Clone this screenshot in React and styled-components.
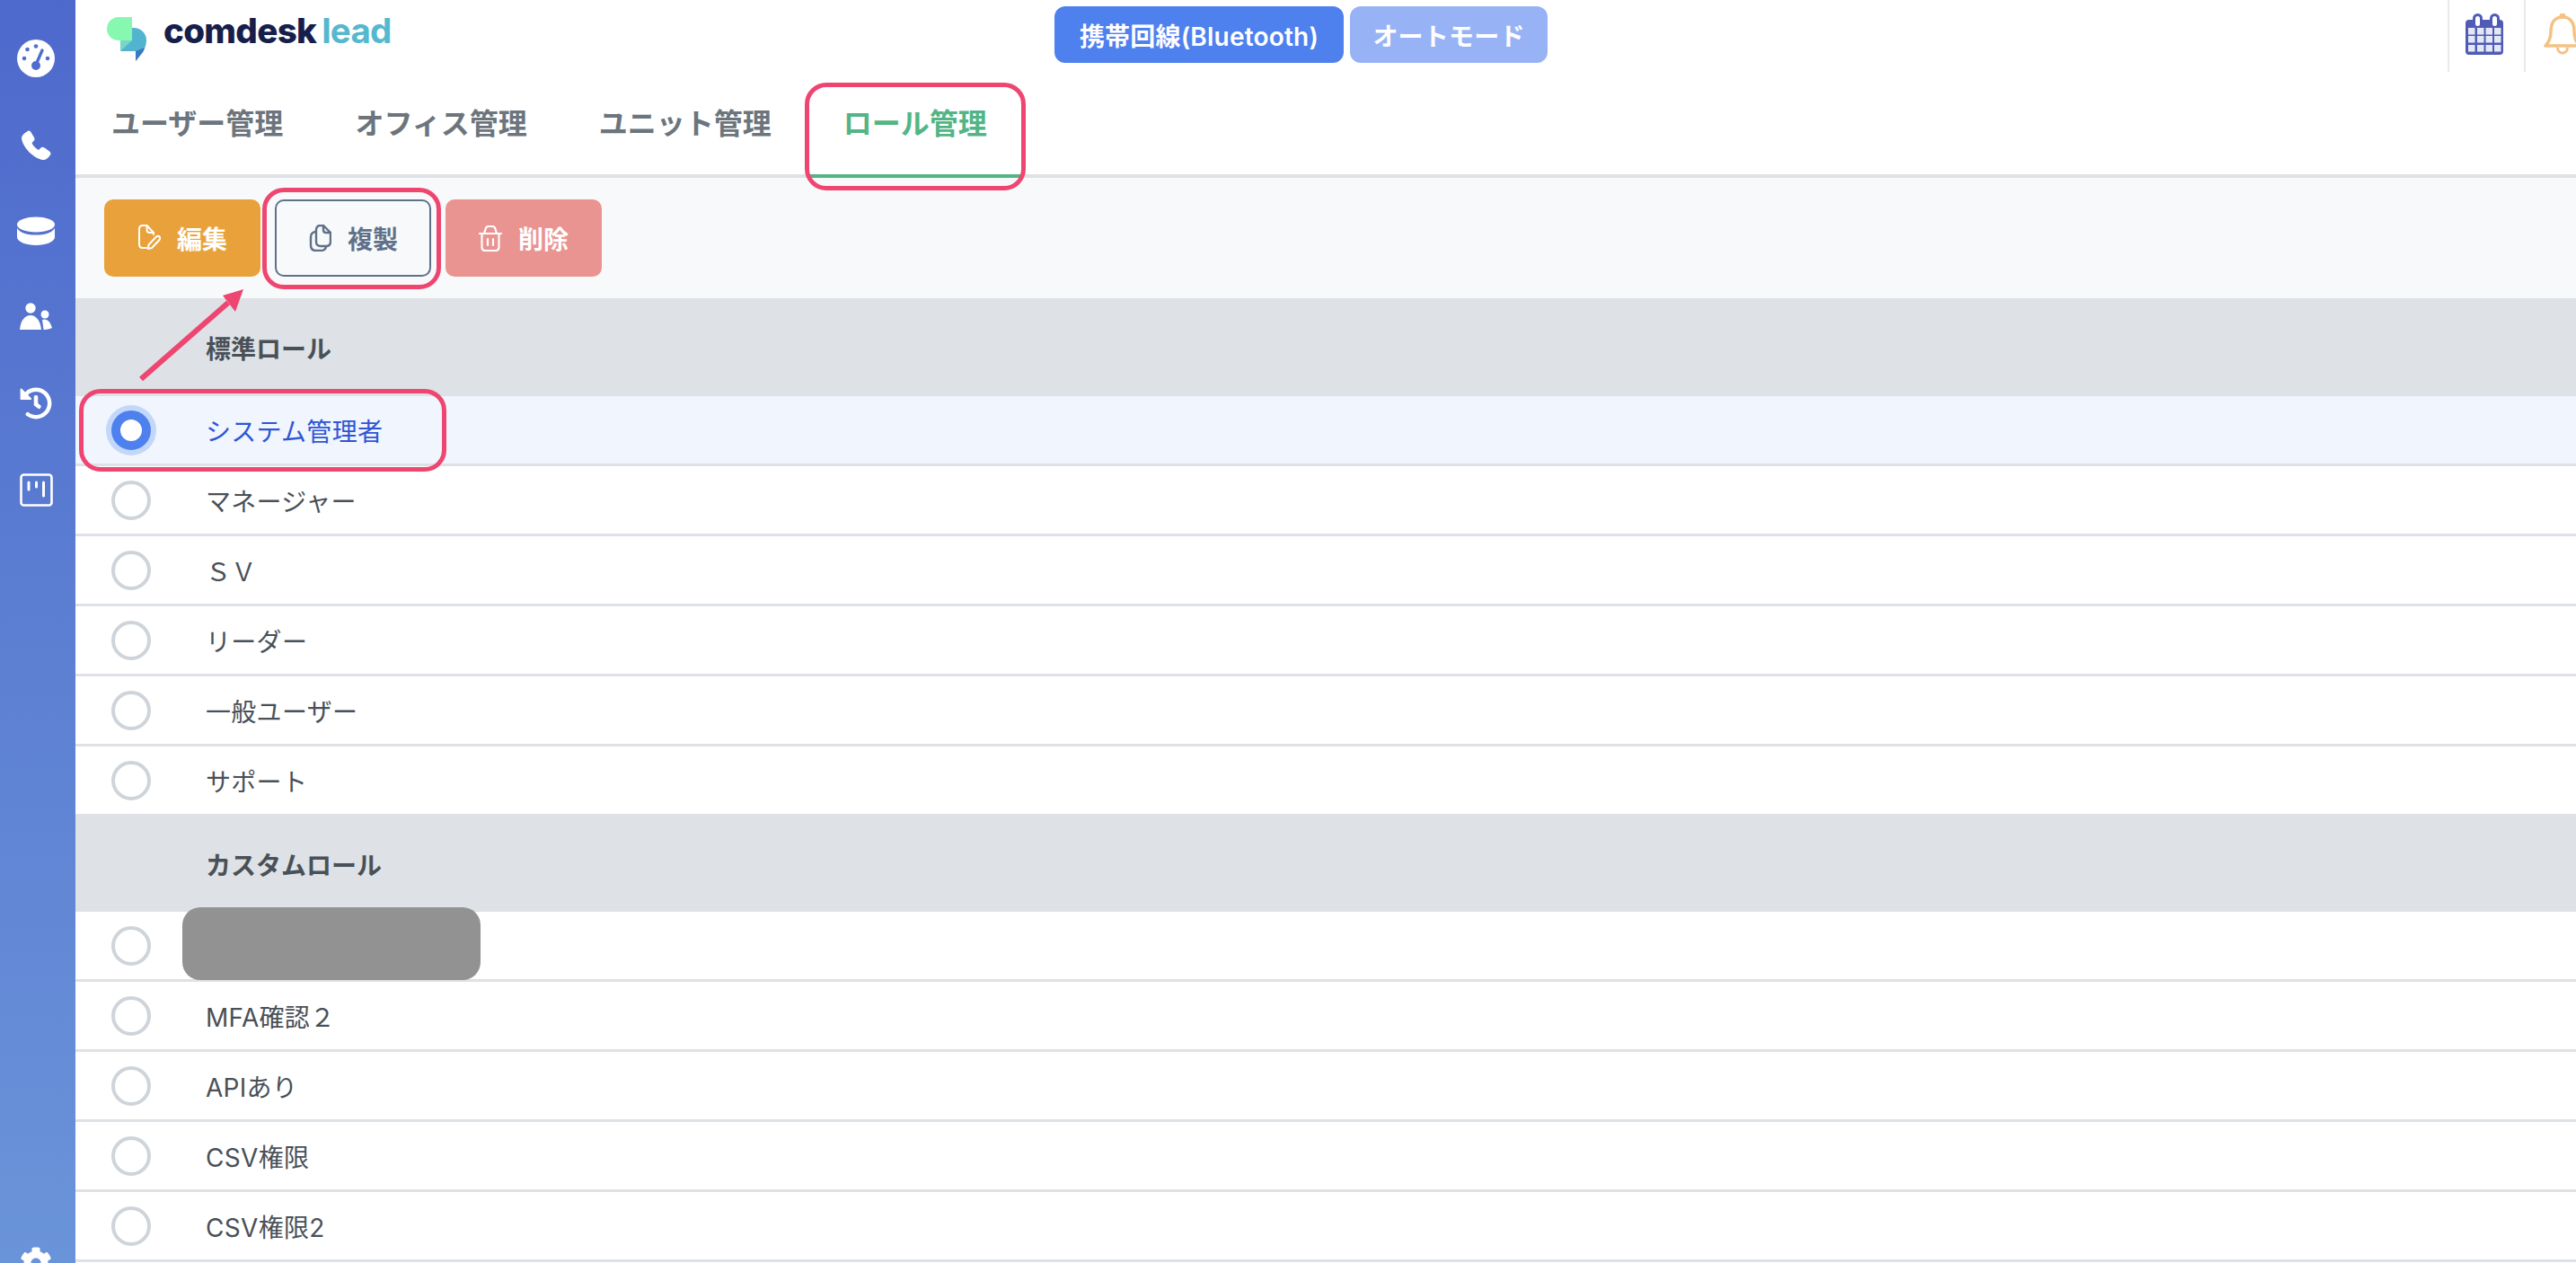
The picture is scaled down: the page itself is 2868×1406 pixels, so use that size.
import React from 'react'
import styled, {createGlobalStyle} from 'styled-components'
import {FaHistory, FaCog} from 'react-icons/fa'

const GlobalStyle = createGlobalStyle`
  html, body {
    margin: 0;
    padding: 0;
    background: #fff;
  }
  body {
    font-family: Inter, "Noto Sans CJK JP", "Noto Sans", sans-serif;
    color: #495057;
  }
  * {
    box-sizing: border-box;
  }
`

const Page = styled.div`
  display: flex;
  width: 2868px;
  height: 1406px;
  overflow: hidden;
`

const Sidebar = styled.nav`
  width: 84px;
  flex-shrink: 0;
  display: flex;
  flex-direction: column;
  padding: 17px 4px 0 0;
  background: linear-gradient(180deg, #4e69cc 0%, #6a94d9 100%);
  color: #fff;
`

const NavItem = styled.div`
  height: 96px;
  flex-shrink: 0;
  display: flex;
  align-items: center;
  justify-content: center;
`

const BottomItem = styled(NavItem)`
  margin-top: auto;
  margin-bottom: -48px;
`

const Main = styled.div`
  flex: 1;
  min-width: 0;
  position: relative;
  display: flex;
  flex-direction: column;
`

const TopBar = styled.header`
  height: 84px;
  flex-shrink: 0;
  display: flex;
  align-items: flex-start;
`

const Brand = styled.div`
  width: 1090px;
  padding: 19px 0 0 35px;
  display: flex;
  align-items: flex-start;
`

const BrandText = styled.div`
  margin: -9px 0 0 19px;
  font-size: 38.5px;
  line-height: 48px;
  font-weight: 800;
  letter-spacing: -0.7px;
  color: #161f4b;
`

const BrandAccent = styled.span`
  margin-left: 6px;
  font-weight: 700;
  color: #55b8cf;
`

const ModeGroup = styled.div`
  display: flex;
  gap: 7px;
  padding-top: 7px;
`

const ModeButton = styled.button`
  height: 63px;
  width: ${p => p.$width}px;
  padding: 0;
  border: none;
  border-radius: 12px;
  background: ${p => (p.$muted ? '#97b3f5' : '#4e80ee')};
  color: #fff;
  font: 600 28px Inter, "Noto Sans CJK JP", sans-serif;
  letter-spacing: 0.2px;
`

const TopIcons = styled.div`
  margin-left: auto;
  display: flex;
  width: 143px;
  overflow: hidden;
`

const TopIconCell = styled.div`
  flex: 0 0 ${p => p.$width}px;
  height: 80px;
  padding-top: 15px;
  padding-left: ${p => p.$inset}px;
  border-left: 2px solid #e9e9e9;
`

const Tabs = styled.div`
  height: 114px;
  flex-shrink: 0;
  display: flex;
  border-bottom: 4px solid #dee2e6;
`

const Tab = styled.div`
  position: relative;
  height: 114px;
  padding: 0 40px 9px;
  display: flex;
  align-items: center;
  font-size: 32px;
  font-weight: 600;
  color: ${p => (p.$active ? '#53b586' : '#6c757d')};
  border-bottom: 4px solid ${p => (p.$active ? '#53b586' : 'transparent')};
`

const Callout = styled.div`
  position: absolute;
  inset: ${p => p.$inset};
  z-index: 2;
  border: 5px solid #ee4670;
  border-radius: 24px;
  pointer-events: none;
`

const RowCallout = styled(Callout)`
  width: 409px;
`

const Toolbar = styled.div`
  height: 134px;
  flex-shrink: 0;
  display: flex;
  gap: 16px;
  padding: 24px 0 0 32px;
  background: #f8f9fa;
`

const ActionButton = styled.button`
  position: relative;
  width: 174px;
  height: 86px;
  padding: 0;
  display: flex;
  align-items: center;
  justify-content: center;
  gap: 18px;
  border: 2px solid ${p => p.$border};
  border-radius: 10px;
  background: ${p => p.$bg};
  color: ${p => p.$color};
  font: 600 28px Inter, "Noto Sans CJK JP", sans-serif;
`

const SectionHeader = styled.div`
  height: ${p => p.$height}px;
  flex-shrink: 0;
  display: flex;
  align-items: center;
  padding-left: 145px;
  background: #dee2e6;
  font-size: 28px;
  font-weight: 700;
  color: #495057;
`

const Row = styled.div`
  position: relative;
  height: 78px;
  flex-shrink: 0;
  display: flex;
  align-items: center;
  padding-left: 40px;
  border-bottom: 3px solid #dee2e6;
  background: ${p => (p.$selected ? '#f0f5fe' : '#fff')};
  color: ${p => (p.$selected ? '#2f55d4' : '#495057')};
  font-size: 28px;
  letter-spacing: 0.3px;
`

const Radio = styled.span`
  width: 44px;
  height: 44px;
  flex-shrink: 0;
  margin-right: 61px;
  border-radius: 50%;
  background: #fff;
  border: ${p => (p.$checked ? '10px solid #4e80ee' : '4px solid #ced4da')};
  box-shadow: ${p => (p.$checked ? '0 0 0 6px #c3d7fa' : 'none')};
`

const Redaction = styled.div`
  position: absolute;
  left: 119px;
  top: -5px;
  width: 332px;
  height: 81px;
  border-radius: 20px;
  background: #929292;
`

const ArrowSvg = styled.svg`
  position: absolute;
  left: 70px;
  top: 318px;
  z-index: 2;
  pointer-events: none;
`

const GaugeIcon = () => (
    <svg width="42" height="42" viewBox="0 0 42 42">
        <circle cx="21" cy="21" r="21" fill="#fff"/>
        <g fill="#4f6dce">
            <circle cx="21" cy="7.500" r="2.300"/>
            <circle cx="11.500" cy="11" r="2.300"/>
            <circle cx="8" cy="21" r="2.300"/>
            <circle cx="34" cy="21" r="2.300"/>
            <circle cx="21" cy="29" r="5"/>
        </g>
        <path d="M21 28 L28 12" stroke="#4f6dce" strokeWidth="3.400" strokeLinecap="round"/>
    </svg>
)

const PhoneIcon = () => (
    <svg width="33" height="33" viewBox="0 0 33 33" fill="#fff">
        <path d="M7 1 C9 0 10 1 11 3 L14 8 C15 10 14.500 11 13 12.500 L11.500 14 C12.500 17 16 20.500 19 22 L21 20 C22.500 18.500 24 18.500 25.500 19.500 L30.500 23 C32.500 24.500 33 26 32 27.500 C30 31 27 33 24 33 C14 32 1 19 0 9 C0 6 3 3 7 1 Z"/>
    </svg>
)

const DatabaseIcon = () => (
    <svg width="42" height="32" viewBox="0 0 42 32">
        <ellipse cx="21" cy="9" rx="21" ry="8.500" fill="#fff"/>
        <path d="M0 13 C4 19 12 20.500 21 20.500 C30 20.500 38 19 42 13 V23 C42 28 32 32 21 32 C10 32 0 28 0 23 Z" fill="#fff"/>
    </svg>
)

const UsersIcon = () => (
    <svg width="36" height="32" viewBox="0 0 36 32" fill="#fff">
        <circle cx="12" cy="6" r="5.700"/>
        <circle cx="28" cy="13" r="4.500"/>
        <path d="M0 30 C1 19 6 14 12 14 C18 14 23 20 24 30 Z"/>
        <path d="M25 19 C30 17 34 21 36 28 C33 29.500 30 30 26.500 30 C26 26 25.500 22 25 19 Z"/>
    </svg>
)

const BoardIcon = () => (
    <svg width="37" height="37" viewBox="0 0 37 37" fill="none" stroke="#fff">
        <rect x="1.500" y="1.500" width="34" height="34" rx="3" strokeWidth="2.600"/>
        <path d="M10 10 V18 M18.500 10 V15 M26.500 10 V25" strokeWidth="3" strokeLinecap="round"/>
    </svg>
)

const BrandMark = () => (
    <svg width="44" height="49" viewBox="0 0 44 49">
        <path d="M28 12 H30 A14 14 0 0 1 44 26 C44 31 42 35 40 39 L32 49 V38 H15 V26 H28 Z" fill="#53b4cf"/>
        <path d="M42 34 C41.500 36 41 37.500 40 39 L32 49 V38 Z" fill="#3a78c4"/>
        <path d="M13 0 H28 V26 H13 A13 13 0 0 1 13 0 Z" fill="#86f8b0"/>
        <path d="M15 26 H28 L15 38 Z" fill="#78d6c6"/>
    </svg>
)

const CalendarIcon = () => (
    <svg width="42" height="46" viewBox="0 0 42 46">
        <rect x="0" y="7" width="42" height="39" rx="4" fill="#4f5bb5"/>
        <rect x="8" y="0" width="11" height="14" rx="5.500" fill="#4f5bb5"/>
        <rect x="27" y="0" width="11" height="14" rx="5.500" fill="#4f5bb5"/>
        <rect x="11" y="3" width="5" height="11" rx="2.500" fill="#fff"/>
        <rect x="30" y="3" width="5" height="11" rx="2.500" fill="#fff"/>
        {[16, 25, 35].map(y => [3, 13, 22.500, 32].map(x => (
            <rect key={`${x}-${y}`} x={x} y={y} width="7.500" height="7.500" fill="#e4e7f6"/>
        )))}
    </svg>
)

const BellIcon = () => (
    <svg width="42" height="46" viewBox="0 0 42 46" fill="none" stroke="#f4c283" strokeWidth="3.500">
        <path d="M21 4 C11 4 8 12 8 20 C8 28 6 32 2 36 H40 C36 32 34 28 34 20 C34 12 31 4 21 4 Z" strokeLinejoin="round"/>
        <circle cx="21" cy="2.500" r="1.500" fill="#f4c283"/>
        <path d="M15.500 38 C15.500 46 26.500 46 26.500 38" strokeWidth="3"/>
    </svg>
)

const EditIcon = () => (
    <svg width="26" height="30" viewBox="0 0 26 30" fill="none" stroke="currentColor" strokeWidth="2" strokeLinecap="round" strokeLinejoin="round">
        <path d="M10 26 H6 Q2 26 2 22 V5 Q2 1 6 1 H10.500 L18 9 V11"/>
        <path d="M10.500 1 V6 Q10.500 9 14 9 H18"/>
        <path d="M12 27 L12.500 22.500 L21 13.500 Q23 12 24.500 13.500 Q26 15 24.500 17 L16 26 Z"/>
    </svg>
)

const CopyIcon = () => (
    <svg width="26" height="30" viewBox="0 0 26 30" fill="none" stroke="currentColor" strokeWidth="2.400" strokeLinecap="round" strokeLinejoin="round">
        <path d="M8 8 Q3 9 3 14 V23 Q3 29 9 29 H14 Q19 29 20 25"/>
        <path d="M9 19 V6 Q9 1 14 1 H17 L25 9 V19 Q25 24 20 24 H14 Q9 24 9 19 Z"/>
        <path d="M17 1 V6 Q17 9 20 9 H25"/>
    </svg>
)

const TrashIcon = () => (
    <svg width="26" height="30" viewBox="0 0 26 30" fill="none" stroke="currentColor" strokeWidth="2.200" strokeLinecap="round" strokeLinejoin="round">
        <path d="M1 10 H25"/>
        <path d="M6 10 L7.500 5 Q8 2 11 2 H15 Q18 2 18.500 5 L20 10"/>
        <path d="M3.500 10 V25 Q3.500 29 7.500 29 H18.500 Q22.500 29 22.500 25 V10"/>
        <path d="M10 16 V23 M16 16 V23"/>
    </svg>
)

const standardRoles = ['システム管理者', 'マネージャー', 'ＳＶ', 'リーダー', '一般ユーザー', 'サポート']
const customRoles = ['', 'MFA確認２', 'APIあり', 'CSV権限', 'CSV権限2']
const tabNames = ['ユーザー管理', 'オフィス管理', 'ユニット管理', 'ロール管理']

const App = () => {
    return (
        <Page>
            <GlobalStyle/>
            <Sidebar>
                <NavItem><GaugeIcon/></NavItem>
                <NavItem><PhoneIcon/></NavItem>
                <NavItem><DatabaseIcon/></NavItem>
                <NavItem><UsersIcon/></NavItem>
                <NavItem><FaHistory size={36}/></NavItem>
                <NavItem><BoardIcon/></NavItem>
                <BottomItem><FaCog size={36}/></BottomItem>
            </Sidebar>
            <Main>
                <TopBar>
                    <Brand>
                        <BrandMark/>
                        <BrandText>comdesk<BrandAccent>lead</BrandAccent></BrandText>
                    </Brand>
                    <ModeGroup>
                        <ModeButton $width={322}>携帯回線(Bluetooth)</ModeButton>
                        <ModeButton $width={220} $muted>オートモード</ModeButton>
                    </ModeGroup>
                    <TopIcons>
                        <TopIconCell $width={85} $inset={18}><CalendarIcon/></TopIconCell>
                        <TopIconCell $width={58} $inset={20}><BellIcon/></TopIconCell>
                    </TopIcons>
                </TopBar>
                <Tabs>
                    {tabNames.map((name, i) => (
                        <Tab key={name} $active={i === 3}>
                            {name}
                            {i === 3 && <Callout $inset="8px -3px -18px -3px"/>}
                        </Tab>
                    ))}
                </Tabs>
                <Toolbar>
                    <ActionButton $bg="#e9a23b" $border="#e9a23b" $color="#fff">
                        <EditIcon/>編集
                    </ActionButton>
                    <ActionButton $bg="#f8f9fa" $border="#5f7089" $color="#5f7089">
                        <CopyIcon/>複製
                        <Callout $inset="-15px -13px -16px -16px"/>
                    </ActionButton>
                    <ActionButton $bg="#e99490" $border="#e99490" $color="#fff">
                        <TrashIcon/>削除
                    </ActionButton>
                </Toolbar>
                <SectionHeader $height={109}>標準ロール</SectionHeader>
                {standardRoles.map((role, i) => (
                    <Row key={role} $selected={i === 0}>
                        <Radio $checked={i === 0}/>
                        {role}
                        {i === 0 && <RowCallout $inset="-8px auto -9px 4px"/>}
                    </Row>
                ))}
                <SectionHeader $height={106}>カスタムロール</SectionHeader>
                {customRoles.map((role, i) => (
                    <Row key={i}>
                        <Radio/>
                        {role}
                        {i === 0 && <Redaction/>}
                    </Row>
                ))}
                <ArrowSvg width="124" height="110" viewBox="0 0 124 110">
                    <path d="M3 104 L100 19" stroke="#ee4670" strokeWidth="6"/>
                    <polygon points="117,4 94,11 108,29" fill="#ee4670"/>
                </ArrowSvg>
            </Main>
        </Page>
    )
}

export default App
